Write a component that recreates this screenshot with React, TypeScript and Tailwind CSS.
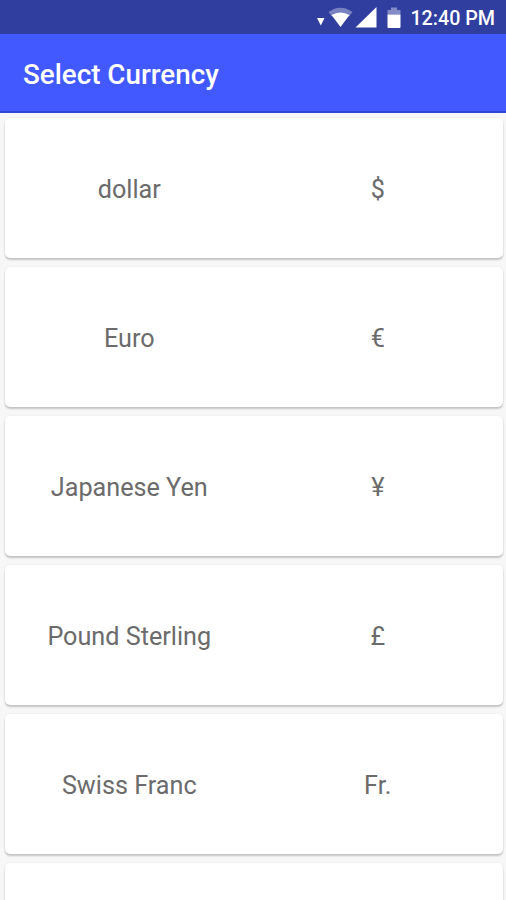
const currencies = [
  { name: 'dollar', symbol: '$' },
  { name: 'Euro', symbol: '€' },
  { name: 'Japanese Yen', symbol: '¥' },
  { name: 'Pound Sterling', symbol: '£' },
  { name: 'Swiss Franc', symbol: 'Fr.' },
  { name: '', symbol: '' },
]

function StatusBar() {
  return (
    <div className="flex h-[34px] shrink-0 items-center justify-end bg-[#303f9f] pr-[11px] text-white">
      <svg className="shrink-0" width="92" height="34" viewBox="0 0 92 34" fill="currentColor">
        <path d="M6 18h7.500l-3.700 7.500z" />
        <path d="M17.500 12q12-8.500 24 0l-3.500 4.500q-8.500-6-17 0z" opacity=".35" />
        <path d="M20.500 15q9-5 18 0L29.500 27z" />
        <path d="M65.500 7v20.500H44.500z" />
        <path d="M80 10V7.500h6V10h3.500v4.500h-13V10z" opacity=".4" />
        <path d="M76.500 14.500h13V27q0 1-1 1h-11q-1 0-1-1z" />
      </svg>
      <span className="ml-[7px] mt-[3px] text-[19.700px] font-medium whitespace-nowrap">12:40 PM</span>
    </div>
  )
}

export default function App() {
  return (
    <div className="flex h-[900px] w-[506px] flex-col overflow-hidden bg-[#fafafa] font-['Roboto',sans-serif]">
      <StatusBar />
      <header className="flex h-[79px] shrink-0 items-center border-b-2 border-[#3046d8] bg-[#4259ff] pt-[5px] pl-[23px]">
        <h1 className="text-[27.800px] font-medium text-white">Select Currency</h1>
      </header>
      <main className="flex flex-col gap-[9px] bg-[#f7f7f7] pt-[5px] pr-[3px] pl-[5px]">
        {currencies.map((c, i) => (
          <div
            key={i}
            className="grid h-[140px] shrink-0 grid-cols-2 items-center rounded-[5px] bg-white pt-[3px] pr-px text-center text-[25.200px] text-[#6b6b6b] shadow-[0_2px_2px_rgba(0,0,0,0.2),0_0_2px_rgba(0,0,0,0.08)]"
          >
            <span>{c.name}</span>
            <span>{c.symbol}</span>
          </div>
        ))}
      </main>
    </div>
  )
}
